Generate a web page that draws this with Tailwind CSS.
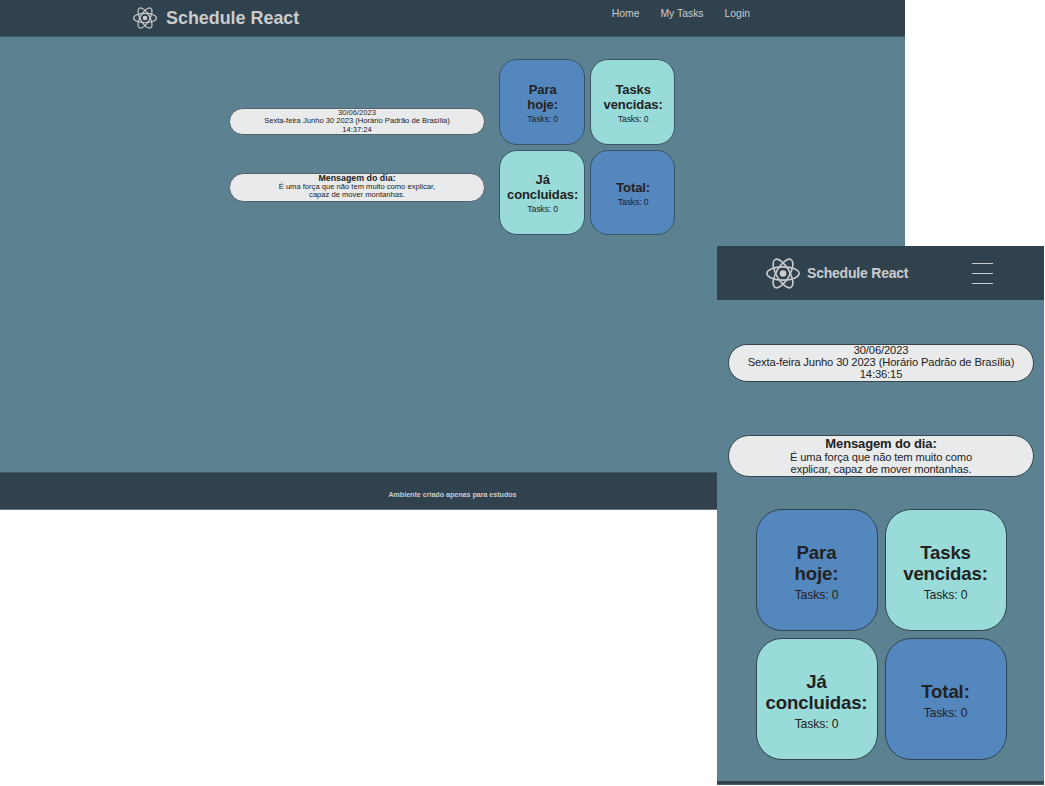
<!DOCTYPE html>
<html lang="pt-BR">
<head>
<meta charset="utf-8">
<title>Schedule React</title>
<script src="https://cdn.jsdelivr.net/npm/@tailwindcss/browser@4"></script>
</head>
<body class="relative h-[786px] w-[1045px] overflow-hidden bg-white font-['Liberation_Sans',Arial,sans-serif] text-[#222222]">
<svg class="hidden">
  <symbol id="atom" viewBox="-12 -11 24 22">
    <g fill="none" stroke="currentColor" stroke-width="1.15">
      <ellipse rx="11.4" ry="4.7"/>
      <ellipse rx="11.4" ry="4.7" transform="rotate(60)"/>
      <ellipse rx="11.4" ry="4.7" transform="rotate(120)"/>
    </g>
    <circle r="2.3" fill="currentColor"/>
  </symbol>
</svg>

<!-- Desktop -->
<div class="flex h-[510px] w-[905px] flex-col bg-[#5c8291]">
  <header class="flex h-[37px] shrink-0 justify-between border-b border-[#3c5966] bg-[#2f424d] pr-[155px] pl-[133px] text-[#cccccc]">
    <div class="flex h-[35px] items-center gap-[9px]">
      <svg class="h-[22px] w-6 overflow-visible"><use href="#atom"/></svg>
      <h1 class="text-[17.9px] leading-5 font-bold whitespace-nowrap">Schedule React</h1>
    </div>
    <nav class="flex gap-[21px] pt-[7px] text-[10.4px] leading-[14px] whitespace-nowrap">
      <a>Home</a><a>My Tasks</a><a>Login</a>
    </nav>
  </header>
  <main class="flex flex-1 gap-[14.4px] pt-[22px] pl-[229px]">
    <div class="flex w-[256px] flex-col gap-[38px] pt-[49px] text-center text-[7.6px] leading-[8.4px] whitespace-nowrap">
      <div class="h-[27px] rounded-full border border-[#55606a] bg-[#e9eaec]">
        <p>30/06/2023</p><p>Sexta-feira Junho 30 2023 (Horário Padrão de Brasília)</p><p>14:37:24</p>
      </div>
      <div class="h-[29px] rounded-full border border-[#55606a] bg-[#e9eaec]">
        <div class="-mt-px"><h2 class="text-[8.85px] leading-[10px] font-bold">Mensagem do dia:</h2>
        <p>É uma força que não tem muito como explicar,</p><p>capaz de mover montanhas.</p></div>
      </div>
    </div>
    <div class="grid h-[176px] w-[176px] grid-cols-2 gap-[5px] text-center text-[8.6px] leading-[15px] tracking-[-0.1px]">
      <section class="flex flex-col justify-center rounded-[18px] border border-[#3b5365] bg-[#5587bf] pt-[5px] pl-px"><h3 class="text-[13px] leading-[15px] font-bold">Para<br>hoje:</h3><p>Tasks: 0</p></section>
      <section class="flex flex-col justify-center rounded-[18px] border border-[#3b5365] bg-[#98dbd9] pt-[5px] pl-px"><h3 class="text-[13px] leading-[15px] font-bold">Tasks<br>vencidas:</h3><p>Tasks: 0</p></section>
      <section class="flex flex-col justify-center rounded-[18px] border border-[#3b5365] bg-[#98dbd9] pt-[4px] pl-px"><h3 class="text-[13px] leading-[15px] font-bold">Já<br>concluidas:</h3><p>Tasks: 0</p></section>
      <section class="flex flex-col justify-center rounded-[18px] border border-[#3b5365] bg-[#5587bf] pt-[4px] pl-px"><h3 class="text-[13px] leading-[15px] font-bold">Total:</h3><p>Tasks: 0</p></section>
    </div>
  </main>
  <footer class="flex h-[38px] shrink-0 items-center justify-center border-y border-t-[#3f5d69] border-b-[#66757e] bg-[#2f424d] pt-[9px] text-[7.1px] font-bold text-[#cccccc]">Ambiente criado apenas para estudos</footer>
</div>

<!-- Mobile window, overlapping the desktop one -->
<div class="absolute top-[246px] left-[717px] flex h-[539px] w-[327px] flex-col bg-[#5c8291]">
  <header class="flex h-[54px] shrink-0 items-center justify-between bg-[#2f424d] pr-[51px] pl-[49px] text-[#cccccc]">
    <div class="flex items-center gap-[7px]">
      <svg class="h-[31px] w-[34px] overflow-visible"><use href="#atom"/></svg>
      <h1 class="text-[14px] leading-5 font-bold tracking-[-0.21px] whitespace-nowrap">Schedule React</h1>
    </div>
    <div class="flex w-[21px] flex-col gap-[9px]"><i class="h-px bg-[#cccccc]"></i><i class="h-px bg-[#cccccc]"></i><i class="h-px bg-[#cccccc]"></i></div>
  </header>
  <main class="flex flex-1 flex-col pt-[43.5px] text-center text-[11.2px] leading-3 tracking-[-0.13px] whitespace-nowrap">
    <div class="mx-[11px] h-[38px] w-[306px] rounded-full border border-[#36444c] bg-[#e9eaec]">
      <div class="-mt-px"><p>30/06/2023</p><p>Sexta-feira Junho 30 2023 (Horário Padrão de Brasília)</p><p>14:36:15</p></div>
    </div>
    <div class="mx-[11px] mt-[53.5px] h-[42px] w-[306px] rounded-full border border-[#36444c] bg-[#e9eaec]">
      <h2 class="text-[13px] leading-[15px] font-bold">Mensagem do dia:</h2>
      <p>É uma força que não tem muito como</p><p>explicar, capaz de mover montanhas.</p>
    </div>
    <div class="mt-8 ml-[38.5px] grid h-[251px] w-[251px] grid-cols-2 gap-[7px] text-[12.2px] leading-[23px]">
      <section class="flex flex-col justify-center rounded-[26px] border border-[#304553] bg-[#5587bf] pt-[9px]"><h3 class="text-[18.6px] leading-[21px] font-bold">Para<br>hoje:</h3><p>Tasks: 0</p></section>
      <section class="flex flex-col justify-center rounded-[26px] border border-[#304553] bg-[#98dbd9] pt-[9px]"><h3 class="text-[18.6px] leading-[21px] font-bold">Tasks<br>vencidas:</h3><p>Tasks: 0</p></section>
      <section class="flex flex-col justify-center rounded-[26px] border border-[#304553] bg-[#98dbd9] pt-[9px]"><h3 class="text-[18.6px] leading-[21px] font-bold">Já<br>concluidas:</h3><p>Tasks: 0</p></section>
      <section class="flex flex-col justify-center rounded-[26px] border border-[#304553] bg-[#5587bf] pt-[8px]"><h3 class="text-[18.6px] leading-[21px] font-bold">Total:</h3><p>Tasks: 0</p></section>
    </div>
  </main>
  <footer class="h-[4px] shrink-0 border-b border-[#4a626e] bg-[#2f424d]"></footer>
</div>
</body>
</html>
